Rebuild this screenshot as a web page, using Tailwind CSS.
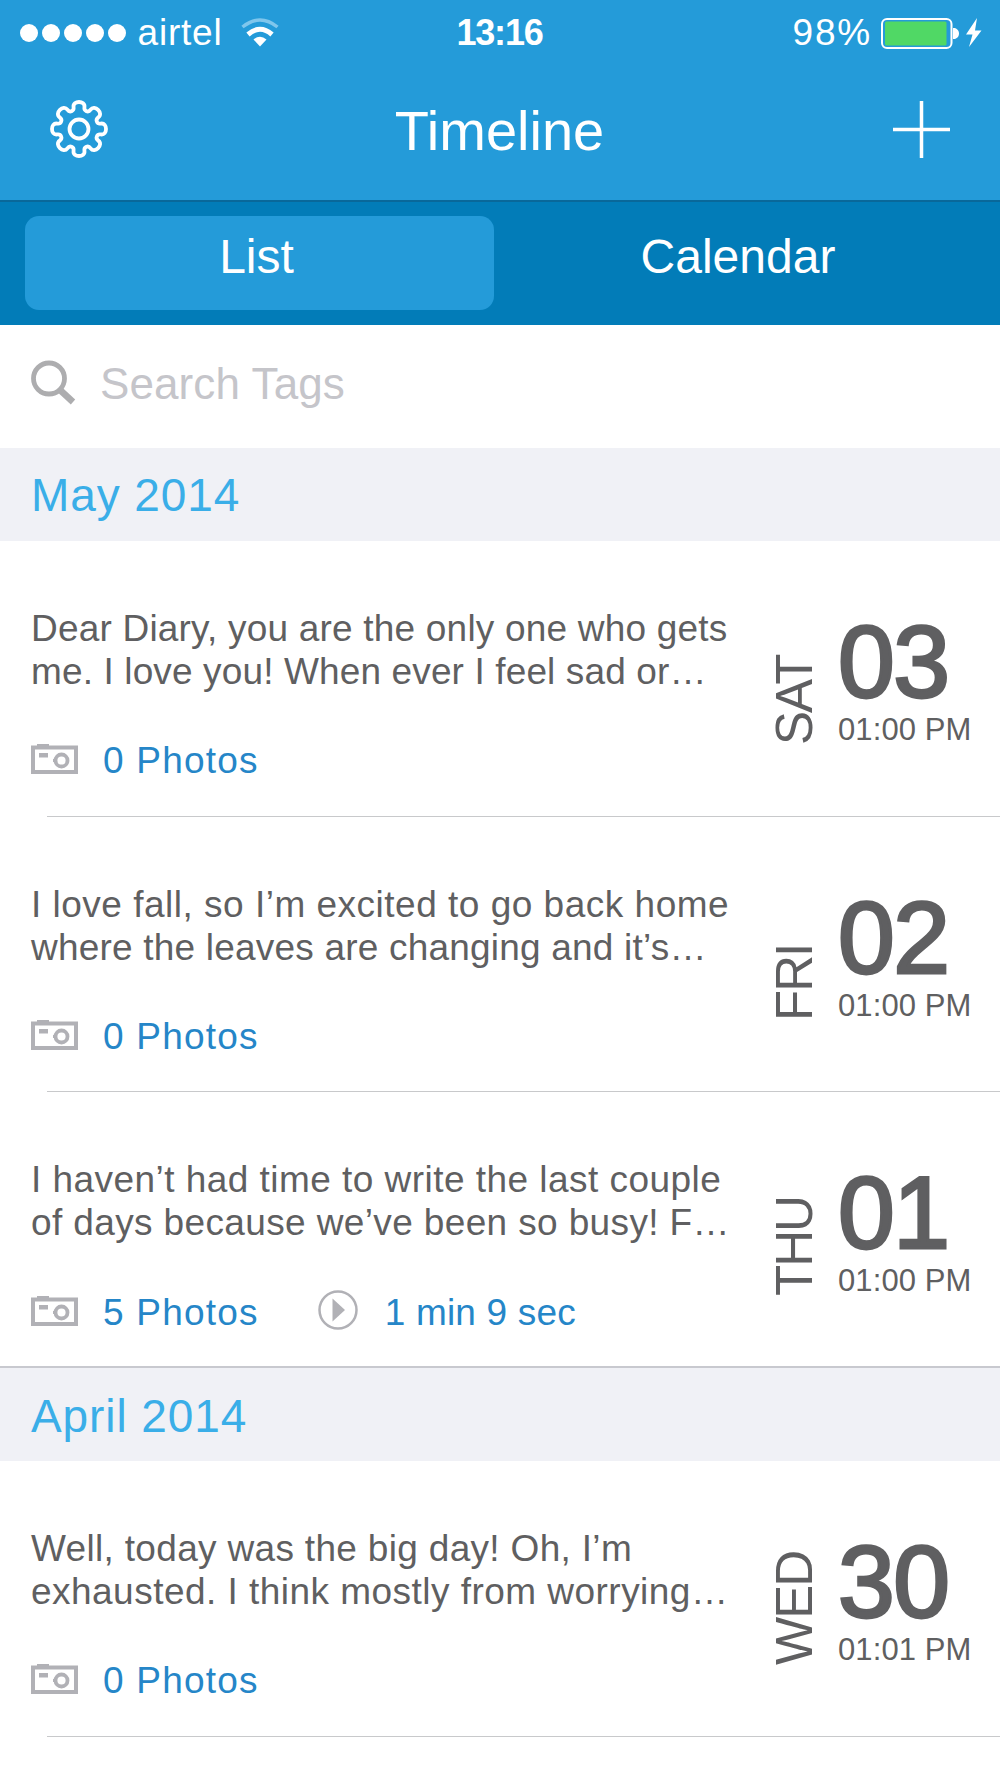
<!DOCTYPE html>
<html lang="en">
<head>
    <meta charset="UTF-8">
    <meta name="viewport" content="width=device-width, initial-scale=1.0">
    <title>Timeline</title>
    <script src="https://cdn.jsdelivr.net/npm/@tailwindcss/browser@4"></script>
</head>
<body class="bg-white w-[1000px] h-[1778px] overflow-hidden font-['Liberation_Sans',Arial,sans-serif] text-[#5f5f61]">
    <!-- Shared icons -->
    <svg class="hidden">
        <symbol id="camera" viewBox="0 0 47 32">
            <path d="M6 1h12v3H6z" fill="#b1b1b6"/>
            <rect x="2" y="4.500" width="43" height="24.500" fill="none" stroke="#b1b1b6" stroke-width="4"/>
            <path d="M8 10h9v4.500H8z" fill="#b1b1b6"/>
            <circle cx="30.500" cy="17.500" r="6" fill="none" stroke="#b1b1b6" stroke-width="3.800"/>
            <path d="M22 16h3v3h-3z" fill="#b1b1b6"/>
        </symbol>
    </svg>

    <header class="bg-[#249bd9] h-[202px] border-b-2 border-[#09689a] text-white">
        <!-- Status bar -->
        <div class="grid grid-cols-3 h-16 pl-5 pr-[18px] items-center text-[37px] leading-[66px]">
            <div class="flex items-center">
                <div class="flex gap-[4.5px]">
                    <span class="size-[17.5px] rounded-full bg-white"></span>
                    <span class="size-[17.5px] rounded-full bg-white"></span>
                    <span class="size-[17.5px] rounded-full bg-white"></span>
                    <span class="size-[17.5px] rounded-full bg-white"></span>
                    <span class="size-[17.5px] rounded-full bg-white"></span>
                </div>
                <span class="ml-[12px] tracking-[0.8px]">airtel</span>
                <svg class="mb-px ml-[18px] w-[38px] h-[30px]" viewBox="0 0 38 30" fill="none">
                    <path d="M1.500 9Q19 -5 36.500 9" stroke="#7fc6ec" stroke-width="3.500"/>
                    <path d="M7 16.500Q19 6 31 16.500" stroke="#fff" stroke-width="5"/>
                    <path d="M12.500 21.500Q19 16 25.500 21.500L19 28.500z" fill="#fff"/>
                </svg>
            </div>
            <div class="pr-[3px] text-center text-4xl leading-[66px] font-bold tracking-[-1.2px]">13:16</div>
            <div class="flex items-center justify-end">
                <span class="tracking-[1.8px]">98%</span>
                <svg class="mb-px ml-[9px] w-[101px] h-[32px]" viewBox="0 0 101 32">
                    <rect x="1" y="2" width="69.500" height="29" rx="5" fill="none" stroke="#fff" stroke-width="2"/>
                    <rect x="4" y="4.500" width="61.500" height="24" rx="1.500" fill="#50d865"/>
                    <path d="M72 11h2q4 1.500 4 5.500t-4 5.500h-2z" fill="#fff"/>
                    <path d="M96 1L85 17.500h6.500L88 30L100.500 13.500H94z" fill="#fff"/>
                </svg>
            </div>
        </div>
        <!-- Nav bar -->
        <div class="flex items-center justify-between h-[130px] pl-[49px] pr-[50px]">
            <svg class="size-[60px]" viewBox="-30 -30 60 60" fill="none" stroke="#fff" stroke-width="3.800" stroke-linejoin="round">
                <path id="gear"/>
                <circle r="9.500"/>
            </svg>
            <h1 class="pt-[3px] pr-[3px] text-[56px] leading-[64px]">Timeline</h1>
            <svg class="size-[57px]" viewBox="0 0 57 57" stroke="#fff" stroke-width="3.500">
                <path d="M28.500 0v57M0 28.500h57"/>
            </svg>
        </div>
    </header>

    <nav class="flex h-[123px] bg-[#027cb8] pl-[25px] pt-[14px] text-5xl text-white text-center">
        <button class="w-[469px] h-[94px] rounded-[14px] bg-[#249bd9] pr-1.5 pb-[13px]">List</button>
        <button class="w-[488px] h-[94px] pb-[13px]">Calendar</button>
    </nav>

    <div class="flex items-center h-[123px] pl-[31px]">
        <svg class="mb-[9px] w-[45px] h-[45px]" viewBox="0 0 45 45" fill="none" stroke="#adadaf">
            <circle cx="18" cy="18.500" r="15.500" stroke-width="4.800"/>
            <path d="M28.500 29.500L42 42" stroke-width="6.500"/>
        </svg>
        <span class="mb-[5px] ml-[24px] text-[44px] leading-[50px] tracking-[0.1px] text-[#c5c5ca]">Search Tags</span>
    </div>

    <h2 class="h-[93px] pl-[31px] bg-[#f0f1f6] text-[46px] leading-[95px] tracking-[0.9px] text-[#3aaee8]">May 2014</h2>

    <article class="flex h-[275px] pl-[31px]">
        <div class="w-[739px] pt-[67px] whitespace-nowrap">
            <p class="text-[37px] leading-[42.5px]">
                <span class="tracking-[0.200px]">Dear Diary, you are the only one who gets</span><br>
                <span class="tracking-[0.130px]">me. I love you! When ever I feel sad or…</span>
            </p>
            <div class="flex items-center mt-[47px] text-[37px] leading-[42px] tracking-[1.2px] text-[#2586c8]">
                <svg class="mb-1 w-[47px] h-8"><use href="#camera"/></svg>
                <span class="ml-[25px]">0 Photos</span>
            </div>
        </div>
        <div class="w-[50px] h-[204px] text-[51px] leading-[50px] tracking-[-2px] [writing-mode:vertical-rl] rotate-180">SAT</div>
        <div class="pl-[18px] pt-[70px]">
            <div class="text-[102px] leading-[103px] tracking-[-1.5px] [-webkit-text-stroke:3px_#5f5f61]">03</div>
            <div class="text-[31px] leading-[31px] tracking-[0.1px]">01:00 PM</div>
        </div>
    </article>
    <hr class="ml-[47px] border-t border-[#c8c9cb]">

    <article class="flex h-[274px] pl-[31px]">
        <div class="w-[739px] pt-[67px] whitespace-nowrap">
            <p class="text-[37px] leading-[42.5px]">
                <span class="tracking-[0.500px]">I love fall, so I’m excited to go back home</span><br>
                <span class="tracking-[0.200px]">where the leaves are changing and it’s…</span>
            </p>
            <div class="flex items-center mt-[47px] text-[37px] leading-[42px] tracking-[1.2px] text-[#2586c8]">
                <svg class="mb-1 w-[47px] h-8"><use href="#camera"/></svg>
                <span class="ml-[25px]">0 Photos</span>
            </div>
        </div>
        <div class="w-[50px] h-[204px] text-[51px] leading-[50px] tracking-[-2px] [writing-mode:vertical-rl] rotate-180">FRI</div>
        <div class="pl-[18px] pt-[70px]">
            <div class="text-[102px] leading-[103px] tracking-[-1.5px] [-webkit-text-stroke:3px_#5f5f61]">02</div>
            <div class="text-[31px] leading-[31px] tracking-[0.1px]">01:00 PM</div>
        </div>
    </article>
    <hr class="ml-[47px] border-t border-[#c8c9cb]">

    <article class="flex h-[274px] pl-[31px]">
        <div class="w-[739px] pt-[67px] whitespace-nowrap">
            <p class="text-[37px] leading-[42.5px]">
                <span class="tracking-[0.460px]">I haven’t had time to write the last couple</span><br>
                <span class="tracking-[0.370px]">of days because we’ve been so busy! F…</span>
            </p>
            <div class="flex items-center mt-[46px] text-[37px] leading-[42px] tracking-[1.2px] text-[#2586c8]">
                <svg class="mb-1 w-[47px] h-8"><use href="#camera"/></svg>
                <span class="ml-[25px]">5 Photos</span>
                <svg class="mb-1.5 ml-[59px] size-[40px]" viewBox="0 0 40 40">
                    <circle cx="20" cy="20" r="18.500" fill="none" stroke="#b1b1b6" stroke-width="2.500"/>
                    <path d="M14.500 8.500L27 20L14.500 31.500z" fill="#b1b1b6"/>
                </svg>
                <span class="ml-[27px] tracking-[0.2px]">1 min 9 sec</span>
            </div>
        </div>
        <div class="w-[50px] h-[204px] text-[51px] leading-[50px] tracking-[-2px] [writing-mode:vertical-rl] rotate-180">THU</div>
        <div class="pl-[18px] pt-[70px]">
            <div class="text-[102px] leading-[103px] tracking-[-1.5px] [-webkit-text-stroke:3px_#5f5f61]">01</div>
            <div class="text-[31px] leading-[31px] tracking-[0.1px]">01:00 PM</div>
        </div>
    </article>

    <h2 class="h-[95px] pl-[31px] border-t-2 border-[#c8c9cf] bg-[#f0f1f6] text-[46px] leading-[96px] tracking-[0.9px] text-[#3aaee8]">April 2014</h2>

    <article class="flex h-[275px] pl-[31px]">
        <div class="w-[739px] pt-[67px] whitespace-nowrap">
            <p class="text-[37px] leading-[42.5px]">
                <span class="tracking-[0.320px]">Well, today was the big day! Oh, I’m</span><br>
                <span class="tracking-[0.470px]">exhausted. I think mostly from worrying…</span>
            </p>
            <div class="flex items-center mt-[47px] text-[37px] leading-[42px] tracking-[1.2px] text-[#2586c8]">
                <svg class="mb-1 w-[47px] h-8"><use href="#camera"/></svg>
                <span class="ml-[25px]">0 Photos</span>
            </div>
        </div>
        <div class="w-[50px] h-[204px] text-[51px] leading-[50px] tracking-[-2px] [writing-mode:vertical-rl] rotate-180">WED</div>
        <div class="pl-[18px] pt-[70px]">
            <div class="text-[102px] leading-[103px] tracking-[-1.5px] [-webkit-text-stroke:3px_#5f5f61]">30</div>
            <div class="text-[31px] leading-[31px] tracking-[0.1px]">01:01 PM</div>
        </div>
    </article>
    <hr class="ml-[47px] border-t border-[#c8c9cb]">

    <script>
        // Eight rounded teeth around the hub
        let d = '';
        for (let i = 0; i < 8; i++) {
            const p = (r, deg) => {
                const a = (i * 45 + deg - 90) * Math.PI / 180;
                return (r * Math.cos(a)).toFixed(2) + ' ' + (r * Math.sin(a)).toFixed(2);
            };
            d += (i ? 'L' : 'M') + p(22.5, -14) + 'C' + p(29.5, -13) + ' ' + p(29.5, 13) + ' ' + p(22.5, 14);
            d += 'C' + p(18.5, 15) + ' ' + p(18.5, 30) + ' ' + p(22.5, 31);
        }
        document.getElementById('gear').setAttribute('d', d + 'Z');
    </script>
</body>
</html>
